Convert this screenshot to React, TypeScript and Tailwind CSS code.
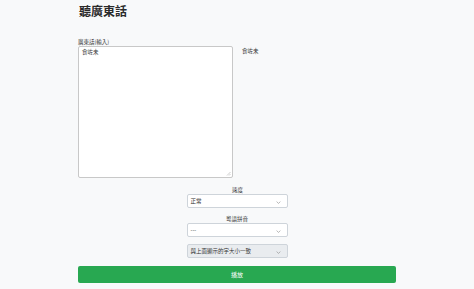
import React from "react";

const Chevron = () => (
  <svg width="5" height="3" viewBox="0 0 5 3" className="absolute right-[6px] top-[5.5px]">
    <path d="M0.6 0.6 L2.5 2.4 L4.4 0.6" fill="none" stroke="#888" strokeWidth="0.6" />
  </svg>
);

function Select({ value, disabled }: { value: string; disabled?: boolean }) {
  return (
    <div
      className={`relative w-[101px] h-[14px] rounded-[2px] border border-[#ced4da] ${
        disabled ? "bg-[#e9ecef]" : "bg-white"
      } text-[5.5px] text-[#333] leading-[12px] pl-[3px]`}
    >
      {value}
      <Chevron />
    </div>
  );
}

export default function App() {
  return (
    <div
      className="w-[474px] h-[289px] bg-[#f8f9fa] overflow-hidden"
      style={{ fontFamily: '"Noto Sans CJK TC", "Noto Sans", sans-serif' }}
    >
      <div className="w-[318px] mx-auto pt-[3px]">
        <h1 className="text-[12px] font-bold text-[#2a2a2a] leading-[16px] pl-[1px]">聽廣東話</h1>
        <div className="flex mt-[20px]">
          <div className="w-[155px] flex flex-col">
            <div className="text-[5.5px] leading-[7px] text-[#333] h-[7px]">廣東話(輸入)</div>
            <div className="relative h-[132px] bg-white border border-[#c8c8c8] rounded-[2px] text-[5.5px] text-[#333] pl-[3px] pt-[1px]">
              食咗未
              <svg width="5" height="5" viewBox="0 0 5 5" className="absolute right-[1px] bottom-[1px]">
                <path d="M4.5 1 L1 4.5 M4.5 3 L3 4.5" stroke="#999" strokeWidth="0.5" />
              </svg>
            </div>
          </div>
          <div className="ml-[9px] pt-[9px] text-[5.5px] text-[#333] leading-[7px]">食咗未</div>
        </div>
        <div className="flex flex-col items-center mt-[9px]">
          <div className="text-[5.5px] text-[#333] leading-[7px] pl-[1px]">速度</div>
          <div><Select value="正常" /></div>
          <div className="text-[5.5px] text-[#333] leading-[7px] mt-[8px]">粵語拼音</div>
          <div><Select value="---" /></div>
          <div className="mt-[7px]"><Select value="與上面顯示的字大小一致" disabled /></div>
        </div>
        <button className="mt-[8px] w-[318px] h-[17px] rounded-[2px] bg-[#28a851] text-white text-[6px] leading-[17px] text-center">
          播放
        </button>
      </div>
    </div>
  );
}
